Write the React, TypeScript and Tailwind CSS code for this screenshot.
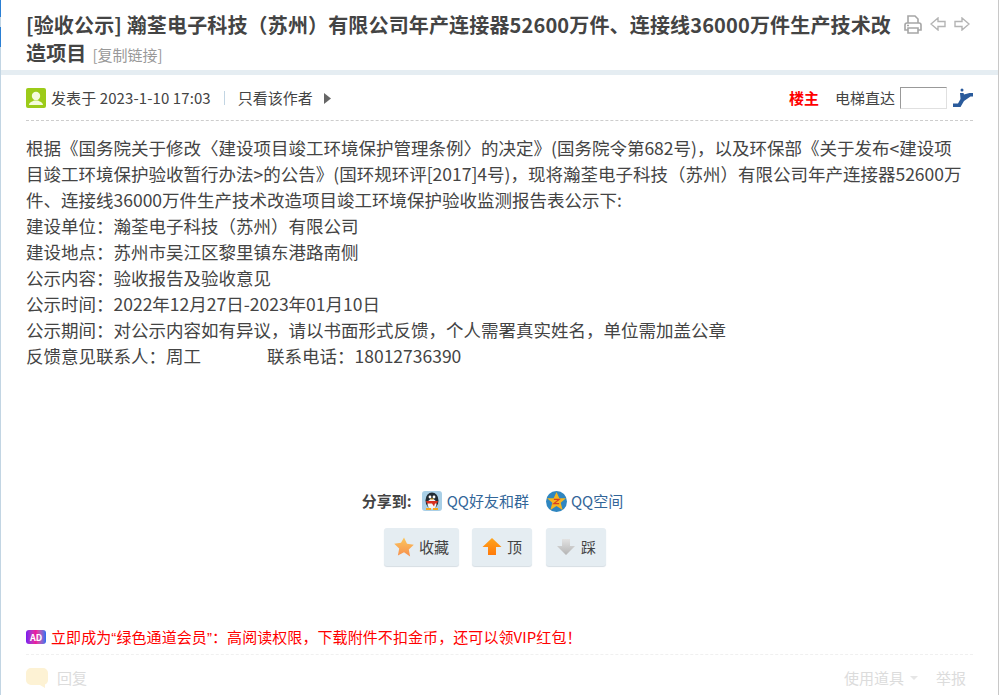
const FONT = "font-['Noto_Sans_CJK_SC',sans-serif]";

function PrintIcon() {
  return (
    <svg width="18" height="19" viewBox="0 0 18 19" fill="none" stroke="#a6a6a6" strokeWidth="1.6">
      <path d="M4 8V1h7l3 3v4" />
      <path d="M3 8h12a2 2 0 0 1 2 2v5H1v-5a2 2 0 0 1 2-2z" />
      <path d="M4 13h10v5H4z" fill="#fff" />
      <path d="M3 10.5h2" />
    </svg>
  );
}

function ArrowIcon({ right }: { right?: boolean }) {
  return (
    <svg width="16" height="14" viewBox="0 0 16 14" fill="none" stroke="#b4b4b4" strokeWidth="1.4">
      <path d={right ? "M1 4.5h7V1l7 6-7 6V9.5H1z" : "M15 4.5H8V1L1 7l7 6V9.5h7z"} />
    </svg>
  );
}

function Avatar() {
  return (
    <svg width="20" height="20" viewBox="0 0 20 20">
      <rect width="20" height="20" rx="2" fill="#9ccb19" />
      <circle cx="10" cy="8" r="4.2" fill="#f4fbdc" />
      <path d="M3 17c0-3 4-3.5 5-4.5h4c1 1 5 1.5 5 4.5z" fill="#f4fbdc" />
    </svg>
  );
}

function Elevator() {
  return (
    <svg width="20" height="20" viewBox="0 0 20 20" fill="#2a5b9c">
      <circle cx="9" cy="2" r="1.5" />
      <path d="M7 5h3.5l.5 1.5L16.5 5H20v3.5h-2.5L11 13l-3.5 6H0v-3.5h5l2.5-4.5z" />
    </svg>
  );
}

function QQIcon() {
  return (
    <svg width="20" height="20" viewBox="0 0 20 20">
      <rect width="20" height="20" rx="3" fill="#a9cfe6" />
      <ellipse cx="10" cy="9.5" rx="6.5" ry="8" fill="#222b33" />
      <ellipse cx="10" cy="13" rx="4.5" ry="5" fill="#f5f5f5" />
      <circle cx="8" cy="6" r="1.4" fill="#fff" />
      <circle cx="12" cy="6" r="1.4" fill="#fff" />
      <path d="M4 10h12l-1 2.5h-2l-1 3-2-3H5z" fill="#d8301f" />
      <path d="M8 7.5h4l-2 1.5z" fill="#f5b21c" />
      <path d="M4 17h5v2H4zM11 17h5v2h-5z" fill="#f5a81c" />
    </svg>
  );
}

function QzoneIcon() {
  return (
    <svg width="21" height="21" viewBox="0 0 20 20">
      <circle cx="10" cy="10" r="10" fill="#2f86c0" />
      <path d="M10 1l2.7 6H19l-5 4.2L15.8 18 10 14.3 4.2 18 6 11.2 1 7h6.3z" fill="#f5b51f" />
      <path d="M7.5 8h5l-5 4h5" fill="none" stroke="#d8401f" strokeWidth="1.2" />
    </svg>
  );
}

function StarIcon() {
  return (
    <svg width="20" height="20" viewBox="0 0 20 20">
      <defs>
        <linearGradient id="starFill" x1="0" y1="0" x2="0" y2="1">
          <stop offset="0" stopColor="#fbc75e" />
          <stop offset="1" stopColor="#f78f4d" />
        </linearGradient>
      </defs>
      <path d="M10 .5l3 6.3 6.8.9-5 4.8 1.3 6.9L10 15.2l-6.1 3.2 1.3-6.9-5-4.8 6.8-.9z" fill="url(#starFill)" />
    </svg>
  );
}

function UpDownIcon({ down }: { down?: boolean }) {
  return (
    <svg width="20" height="20" viewBox="0 0 20 20">
      <defs>
        <linearGradient id="upFill" x1="0" y1="0" x2="0" y2="1">
          <stop offset="0" stopColor="#ffa51e" />
          <stop offset="1" stopColor="#ff7a0a" />
        </linearGradient>
        <linearGradient id="downFill" x1="0" y1="0" x2="0" y2="1">
          <stop offset="0" stopColor="#e2e2e2" />
          <stop offset="1" stopColor="#b4b4b4" />
        </linearGradient>
      </defs>
      {down ? (
        <path d="M6 2h8v7h5l-9 9-9-9h5z" fill="url(#downFill)" />
      ) : (
        <path d="M10 1l9.5 9H14v8H6v-8H.5z" fill="url(#upFill)" />
      )}
    </svg>
  );
}

function VoteButton({ icon, label, width }: { icon: React.ReactNode; label: string; width: string }) {
  return (
    <div className={`flex h-[38px] items-center justify-center gap-[5px] rounded-[3px] bg-[#e5edf2] text-[15px] text-[#444] shadow-[0_1px_1px_#d5dde3] ${width}`}>
      {icon}
      <span>{label}</span>
    </div>
  );
}

export default function App() {
  return (
    <div className={`relative h-[695px] w-[1000px] overflow-hidden bg-white text-[#444] ${FONT}`}>
      {/* Blue slivers on the left edge */}
      <div className="absolute left-0 top-0 h-[17px] w-px bg-[#2a7fd4]" />
      <div className="absolute left-0 top-[27px] h-[20px] w-px bg-[#2a7fd4]" />

      <div className="flex h-[695px] w-[999px] flex-col border-l border-r border-l-[#c2d5e3] border-r-[#c8c8c8]">
        {/* Title */}
        <div className="flex h-[75px] border-b-[5px] border-[#e5edf2] pl-[25px] pr-[17px] pt-[11px]">
          <h1 className="w-[870px] text-[20px] font-bold leading-[28px] tracking-[0.15px] text-[#444]">
            [验收公示] 瀚荃电子科技（苏州）有限公司年产连接器52600万件、连接线36000万件生产技术改造项目
            <span className="ml-[6px] text-[15px] font-normal tracking-normal text-[#999]">[复制链接]</span>
          </h1>
          <div className="ml-[8px] flex h-[26px] items-center gap-[8px]">
            <PrintIcon />
            <ArrowIcon />
            <ArrowIcon right />
          </div>
        </div>

        {/* Post info */}
        <div className="mx-[25px] flex h-[46px] items-center justify-between border-b border-dashed border-[#cdcdcd] pt-[1px] text-[15px]">
          <div className="flex items-center">
            <Avatar />
            <span className="ml-[5px] tracking-[0.1px]">发表于 2023-1-10 17:03</span>
            <span className="mx-[13px] h-[14px] w-px bg-[#c2d5e3]" />
            <span>只看该作者</span>
            <svg className="ml-[11px]" width="7" height="11" viewBox="0 0 7 11" fill="#666">
              <path d="M0 0l7 5.5-7 5.5z" />
            </svg>
          </div>
          <div className="flex items-center">
            <span className="font-bold text-[#f00]">楼主</span>
            <span className="ml-[16px]">电梯直达</span>
            <span className="ml-[5px] h-[22px] w-[47px] border border-b-[#e0e0e0] border-l-[#999] border-r-[#e0e0e0] border-t-[#999]" />
            <span className="ml-[6px] flex"><Elevator /></span>
          </div>
        </div>

        {/* Body */}
        <div className="ml-[25px] mt-[14px] h-[355px] w-[941px] text-[17.5px] leading-[26px] text-[#444]">
          <p>
            根据《国务院关于修改〈建设项目竣工环境保护管理条例〉的决定》(国务院令第682号)，以及环保部《关于发布&lt;建设项目竣工环境保护验收暂行办法&gt;的公告》(国环规环评[2017]4号)，现将瀚荃电子科技（苏州）有限公司年产连接器52600万件、连接线36000万件生产技术改造项目竣工环境保护验收监测报告表公示下:
          </p>
          <p>建设单位：瀚荃电子科技（苏州）有限公司</p>
          <p>建设地点：苏州市吴江区黎里镇东港路南侧</p>
          <p>公示内容：验收报告及验收意见</p>
          <p>公示时间：2022年12月27日-2023年01月10日</p>
          <p>公示期间：对公示内容如有异议，请以书面形式反馈，个人需署真实姓名，单位需加盖公章</p>
          <p className="flex">
            <span className="w-[241px]">反馈意见联系人：周工</span>
            <span>联系电话：18012736390</span>
          </p>
        </div>

        {/* Share */}
        <div className="flex h-[22px] items-center justify-center pr-[14px] text-[15px]">
          <span className="font-bold text-[#444]">分享到:</span>
          <span className="ml-[10px] flex"><QQIcon /></span>
          <span className="ml-[5px] text-[#369]">QQ好友和群</span>
          <span className="ml-[17px] flex"><QzoneIcon /></span>
          <span className="ml-[4px] text-[#369]">QQ空间</span>
        </div>

        <div className="ml-[383px] mt-[16px] flex">
          <VoteButton icon={<StarIcon />} label="收藏" width="w-[75px]" />
          <div className="ml-[13px]">
            <VoteButton icon={<UpDownIcon />} label="顶" width="w-[60px]" />
          </div>
          <div className="ml-[14px]">
            <VoteButton icon={<UpDownIcon down />} label="踩" width="w-[60px]" />
          </div>
        </div>

        {/* Ad line */}
        <div className="mx-[25px] mt-[62px] flex h-[27px] items-start border-b border-dashed border-[#f0f0f0] text-[15px] text-[#f00]">
          <span className="mt-[2px] flex h-[14px] w-[20px] items-center justify-center rounded-[3px] bg-gradient-to-r from-[#7a12f0] via-[#f0129a] to-[#1a6bf0] text-[9px] font-bold leading-none text-white">
            AD
          </span>
          <span className="ml-[5px] leading-[18px] tracking-[0.08px]">
            立即成为<span className="font-['Liberation_Sans',sans-serif]">“</span>绿色通道会员<span className="font-['Liberation_Sans',sans-serif]">”</span>：高阅读权限，下载附件不扣金币，还可以领VIP红包！
          </span>
        </div>

        {/* Faded reply bar */}
        <div className="mx-[25px] flex h-[39px] items-start justify-between pt-[12px] text-[15px] text-[#dcdcdc]">
          <div className="flex items-center">
            <svg width="22" height="20" viewBox="0 0 22 20" fill="#fdf2d4">
              <path d="M5 0h12a5 5 0 0 1 5 5v7a5 5 0 0 1-3 4.6V20l-5-3H5a5 5 0 0 1-5-5V5a5 5 0 0 1 5-5z" />
            </svg>
            <span className="ml-[9px]">回复</span>
          </div>
          <div className="flex items-center pr-[7px]">
            <span>使用道具</span>
            <span className="ml-[6px] border-x-[4px] border-t-[4px] border-x-transparent border-t-[#e6e6e6]" />
            <span className="ml-[18px]">举报</span>
          </div>
        </div>
      </div>
    </div>
  );
}
